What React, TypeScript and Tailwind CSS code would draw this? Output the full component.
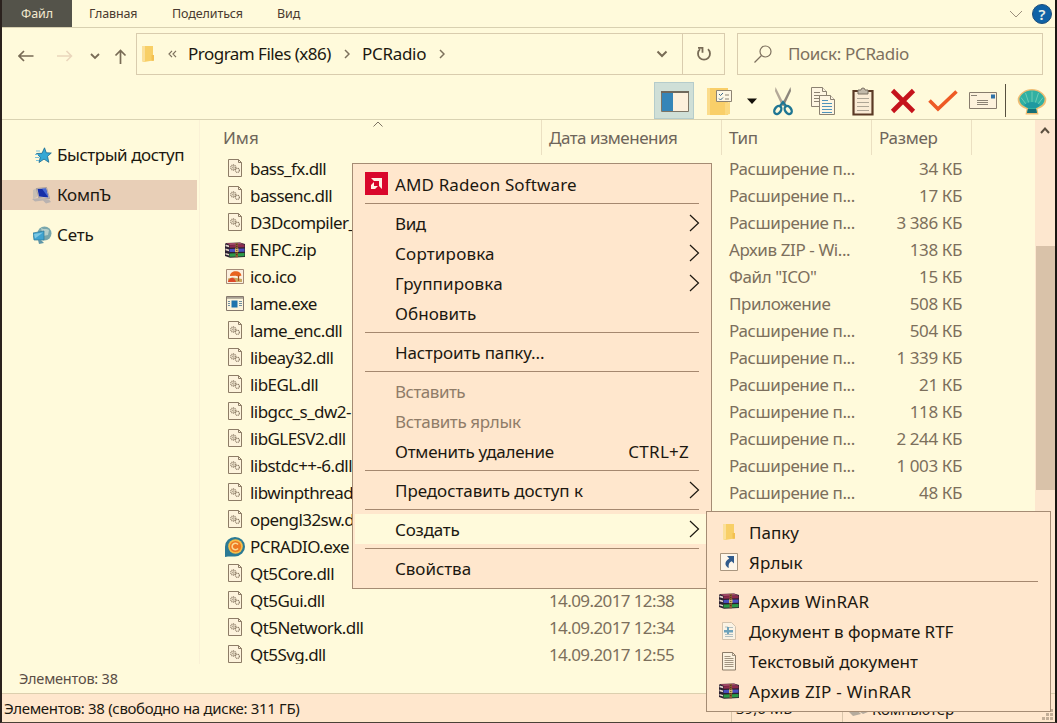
import React from 'react'
import clsx from 'clsx'

type FileKind = 'dll' | 'zip' | 'ico' | 'exe' | 'radio'

type FileRow = {
  name: string
  kind: FileKind
  date?: string
  type?: string
  size?: string
}

const files: FileRow[] = [
  { name: 'bass_fx.dll', kind: 'dll', type: 'Расширение п...', size: '34 КБ' },
  { name: 'bassenc.dll', kind: 'dll', type: 'Расширение п...', size: '17 КБ' },
  { name: 'D3Dcompiler_47.dll', kind: 'dll', type: 'Расширение п...', size: '3 386 КБ' },
  { name: 'ENPC.zip', kind: 'zip', type: 'Архив ZIP - Wi...', size: '138 КБ' },
  { name: 'ico.ico', kind: 'ico', type: 'Файл "ICO"', size: '15 КБ' },
  { name: 'lame.exe', kind: 'exe', type: 'Приложение', size: '508 КБ' },
  { name: 'lame_enc.dll', kind: 'dll', type: 'Расширение п...', size: '504 КБ' },
  { name: 'libeay32.dll', kind: 'dll', type: 'Расширение п...', size: '1 339 КБ' },
  { name: 'libEGL.dll', kind: 'dll', type: 'Расширение п...', size: '21 КБ' },
  { name: 'libgcc_s_dw2-1.dll', kind: 'dll', type: 'Расширение п...', size: '118 КБ' },
  { name: 'libGLESV2.dll', kind: 'dll', type: 'Расширение п...', size: '2 244 КБ' },
  { name: 'libstdc++-6.dll', kind: 'dll', type: 'Расширение п...', size: '1 003 КБ' },
  { name: 'libwinpthread-1.dll', kind: 'dll', type: 'Расширение п...', size: '48 КБ' },
  { name: 'opengl32sw.dll', kind: 'dll' },
  { name: 'PCRADIO.exe', kind: 'radio' },
  { name: 'Qt5Core.dll', kind: 'dll' },
  { name: 'Qt5Gui.dll', kind: 'dll', date: '14.09.2017 12:38' },
  { name: 'Qt5Network.dll', kind: 'dll', date: '14.09.2017 12:34' },
  { name: 'Qt5Svg.dll', kind: 'dll', date: '14.09.2017 12:55' },
]

function DllIcon() {
  return (
    <svg width="16" height="19" viewBox="0 0 16 19" fill="none" stroke="#8d7c66">
      <path d="M1.500 .5h10l3 3v14h-13z" fill="#fdf3dc" />
      <path d="M11.500 .5v3h3" />
      <circle cx="6.300" cy="8.500" r="2.500" strokeWidth="1.300" strokeDasharray="1 .6" />
      <circle cx="6.300" cy="8.500" r=".8" strokeWidth=".7" />
      <circle cx="10.400" cy="11.300" r="2" strokeWidth="1.200" strokeDasharray="1 .5" />
    </svg>
  )
}

function RarIcon() {
  return (
    <svg width="20" height="16" viewBox="0 0 20 16">
      <path d="M1 1l14-.5L20 2v13l-15 .7L0 14V2z" fill="#2b2030" />
      <path d="M1 1.200L15 .8l4.500 1.600L5 3z" fill="#a44a68" />
      <path d="M4.500 3.200l15-.4v2.400l-15 .5z" fill="#8e2a4e" />
      <path d="M4.500 7l15-.4v3.100l-15 .4z" fill="#4a4fc0" />
      <path d="M4.500 11.500l15-.4v3.200l-15 .5z" fill="#2a9a48" />
      <path d="M.5 2.600l3.500 1v1.600l-3.500-1zM.5 6.600l3.500 1v1.600l-3.500-1zM.5 11l3.500 1v1.600l-3.500-1z" fill="#e6d8cf" />
      <path d="M10.500 1H13v14.300h-2.500z" fill="#8a5a30" />
      <path d="M10 6.500h3.500v3.500H10z" fill="#d8b868" />
      <path d="M11.800 2v12" stroke="#3b2718" strokeWidth=".9" strokeDasharray="1 1" />
    </svg>
  )
}

function PictureIcon() {
  return (
    <svg width="18" height="15" viewBox="0 0 18 15">
      <path d="M.5 .5h17v14H.5z" fill="#fbf0df" stroke="#a58b78" />
      <path d="M2 9.500l5-1 9 1.500v3H2z" fill="#c9a860" />
      <path d="M4 7C4 4 7 2 10 2.200c3 0 5 1.800 5.500 4.300l-3 1-3-.8z" fill="#e8641f" />
      <path d="M12.500 6.500v5.500" stroke="#a8501c" strokeWidth="1.200" />
      <path d="M2 12.500C4 8 8 7 10 13H2z" fill="#dd4a2a" />
    </svg>
  )
}

function AppIcon() {
  return (
    <svg width="18" height="15" viewBox="0 0 18 15">
      <path d="M.5 .5h17v14H.5z" fill="#fdf5dc" stroke="#85786c" />
      <path d="M1 1h16v1.800H1z" fill="#a9a294" />
      <path d="M5.500 4.500h6v7h-6z" fill="#1f74ad" />
      <path d="M2 5.500h2M2 7.500h2M2 9.500h2M13 5.500h3M13 7.500h3M13 9.500h3" stroke="#6f8ea0" />
    </svg>
  )
}

function RadioIcon() {
  return (
    <svg width="20" height="20" viewBox="0 0 20 20">
      <path d="M0 20V9.700A10 9.700 0 1 1 10 19.400H3z" fill="#2b7a94" />
      <circle cx="10.500" cy="9.500" r="7.300" fill="#f6bd48" />
      <circle cx="10.500" cy="9.500" r="5.600" fill="#ee7a22" />
      <path d="M13 7.400a3.300 3.300 0 1 0 0 4.200" fill="none" stroke="#fbd890" strokeWidth="1.600" />
    </svg>
  )
}

function FolderIcon({ className }: { className?: string }) {
  return (
    <svg width="13" height="18" viewBox="0 0 13 18" className={className}>
      <path d="M1 1h11v14.500L3 17l-2-1z" fill="#f8cf66" />
      <path d="M1 1h3v15.500H1z" fill="#fbe09a" />
      <path d="M10.500 10H13v5.800h-2.500z" fill="#f3c050" />
    </svg>
  )
}

function FileIcon({ kind }: { kind: FileKind }) {
  if (kind === 'zip') return <RarIcon />
  if (kind === 'ico') return <PictureIcon />
  if (kind === 'exe') return <AppIcon />
  if (kind === 'radio') return <RadioIcon />
  return <DllIcon />
}

function ChevronDown({ className }: { className?: string }) {
  return (
    <svg width="12" height="8" viewBox="0 0 12 8" fill="none" stroke="currentColor" className={className}>
      <path d="M1.500 1.500L6 6l4.500-4.500" />
    </svg>
  )
}

function Crumb() {
  return (
    <svg width="6" height="10" viewBox="0 0 6 10" fill="none" stroke="#7c705c" strokeWidth="1.500">
      <path d="M1 1l4 4-4 4" />
    </svg>
  )
}

function MenuBar() {
  return (
    <div className="flex h-7 shrink-0 items-start border-b border-[#d8d0b0] text-[12.5px] leading-[27px] tracking-[-0.1px] text-[#4a3a30]">
      <div className="w-[70px] bg-[#54534a] text-center text-[#f3ead0]">Файл</div>
      <div className="ml-[17px] w-[83px]">Главная</div>
      <div className="w-[105px]">Поделиться</div>
      <div>Вид</div>
      <div className="ml-auto flex h-[27px] items-center">
        <svg width="14" height="8" viewBox="0 0 14 8" fill="none" stroke="#9c8f7c">
          <path d="M1 1l6 6 6-6" />
        </svg>
        <div className="ml-[9px] mr-[3px] h-5 w-5 rounded-full border border-[#1d4f7c] bg-[#0f62a6] text-center text-[15px] font-semibold leading-[18px] text-[#e8f0e8]">
          ?
        </div>
      </div>
    </div>
  )
}

function AddressBar() {
  return (
    <div className="flex h-[54px] shrink-0 items-start pt-[5px]">
      <div className="flex h-[42px] w-[134px] items-center pl-4 pt-1 text-[#786b55]">
        <svg width="16" height="12" viewBox="0 0 16 12" fill="none" stroke="currentColor" strokeWidth="1.700">
          <path d="M15.500 6H1M6 1L1 6l5 5" />
        </svg>
        <svg width="16" height="12" viewBox="0 0 16 12" fill="none" stroke="#ead6bc" strokeWidth="1.500" className="ml-[23px]">
          <path d="M0 6h14.500M9.500 1l5 5-5 5" />
        </svg>
        <svg width="10" height="7" viewBox="0 0 10 7" fill="none" stroke="currentColor" strokeWidth="1.800" className="ml-[17px]">
          <path d="M1 1l4 4 4-4" />
        </svg>
        <svg width="13" height="15" viewBox="0 0 13 15" fill="none" stroke="currentColor" strokeWidth="1.700" className="ml-[14px]">
          <path d="M6.500 15V1.500M1.500 6.500l5-5 5 5" />
        </svg>
      </div>
      <div className="flex h-[42px] w-[589px] items-center border border-[#d9ccae] pl-1 text-[17px] tracking-[-0.52px] text-[#1c1810]">
        <FolderIcon />
        <svg width="9" height="8" viewBox="0 0 9 8" fill="none" stroke="#7c705c" strokeWidth="1.200" className="ml-[14px]">
          <path d="M4 .8L1 4l3 3.200M8 .8L5 4l3 3.200" />
        </svg>
        <span className="ml-[11px] w-[156px]">Program Files (x86)</span>
        <Crumb />
        <span className="ml-3 w-[77px] tracking-[-0.3px]">PCRadio</span>
        <Crumb />
        <ChevronDown className="ml-auto stroke-2 text-[#786b55]" />
        <div className="ml-[14px] flex h-full w-[42px] items-center justify-center border-l border-[#d9ccae]">
          <svg width="16" height="16" viewBox="0 0 16 16" fill="none" stroke="#786b55" strokeWidth="1.800">
            <path d="M4 3.200A6 6 0 1 0 12 3.200M2 1.800h4.500v5" />
          </svg>
        </div>
      </div>
      <div className="ml-3 flex h-[42px] w-[306px] items-center border border-[#d9ccae] pl-4 text-[17px] tracking-[-0.35px] text-[#7d705e]">
        <svg width="18" height="18" viewBox="0 0 18 18" fill="none" stroke="currentColor" strokeWidth="1.200">
          <circle cx="11.500" cy="6.500" r="5.500" />
          <path d="M7.500 10.500L.5 17.500" />
        </svg>
        <span className="ml-4">Поиск: PCRadio</span>
      </div>
    </div>
  )
}

function Toolbar() {
  return (
    <div className="flex h-[38px] shrink-0 items-center border-b border-[#d9d2b2] pl-[652px]">
      <div className="flex h-[37px] w-10 items-center justify-center border border-[#b5cccb] bg-[#cfdfd7]">
        <svg width="28" height="21" viewBox="0 0 28 21" className="ml-[2px] mt-px">
          <path d="M.5 .5h27v20H.5z" fill="#fdf0dc" stroke="#7d7566" />
          <path d="M1 1h11v19H1z" fill="#3585b8" />
          <path d="M0 0h28v2H0z" fill="#6f685c" />
        </svg>
      </div>
      <svg width="26" height="29" viewBox="0 0 26 29" className="ml-[13px] mt-px">
        <path d="M0 1h21v27H0z" fill="#f9cf69" />
        <path d="M0 1h3v27H0z" fill="#fbdc8c" />
        <path d="M18 16l5-1v12l-5 1z" fill="#fbd980" />
        <path d="M9.500 3.500h15v11h-15z" fill="#fdf7e4" stroke="#8d8372" />
        <path d="M12 7l1.500 1.500L16 6M12 11.500l1.500 1.500 2.500-2.500" stroke="#3b6a8c" fill="none" />
        <path d="M18 8h4M18 12h4" stroke="#8d8372" />
      </svg>
      <svg width="10" height="6" viewBox="0 0 10 6" className="ml-[14px] mt-px">
        <path d="M0 .5h10L5 6z" fill="#14100a" />
      </svg>
      <svg width="22" height="29" viewBox="0 0 22 29" fill="none" className="ml-[15px] mt-px">
        <path d="M3.500 0l9 18-2.500 1L3 4z" fill="#b4a898" />
        <path d="M18.500 0l-9 18 2.500 1L19 4z" fill="#8d867c" />
        <ellipse cx="5.800" cy="23" rx="3" ry="4.400" transform="rotate(35 5.800 23)" stroke="#1f7693" strokeWidth="2.400" />
        <ellipse cx="16.200" cy="23" rx="3" ry="4.400" transform="rotate(-35 16.200 23)" stroke="#1f7693" strokeWidth="2.400" />
        <path d="M8 19l3-4 3 4" stroke="#1f7693" strokeWidth="2.200" />
      </svg>
      <svg width="25" height="29" viewBox="0 0 25 29" fill="#fef6e2" stroke="#8c8272" className="ml-[17px] mt-px">
        <path d="M.5 .5h11l4 4v15H.5z" />
        <path d="M11.500 .5v4h4" />
        <path d="M3 5.500h6M3 8.500h9M3 11.500h9M3 14.500h9" />
        <path d="M8.500 8.500h11l4 4v15h-15z" />
        <path d="M19.500 8.500v4h4" />
        <path d="M11 13.500h6M11 16.500h10M11 19.500h10M11 22.500h10M11 25.500h10" stroke="#4f93ba" />
      </svg>
      <svg width="22" height="29" viewBox="0 0 22 29" className="ml-4 mt-px">
        <path d="M1.500 4h19v23.500h-19z" fill="#faebd5" stroke="#5b3a25" strokeWidth="2.200" />
        <path d="M6 3h3a2 2 0 0 1 4 0h3v4H6z" fill="#c2b9aa" stroke="#7a7062" />
        <path d="M5 11.500h12M5 15.500h12M5 19.500h12M5 23.500h12" stroke="#aea595" />
      </svg>
      <svg width="26" height="26" viewBox="0 0 26 26" stroke="#c5131c" strokeWidth="4.600" className="ml-4 mt-px">
        <path d="M2.500 2.500l21 21M23.500 2.500l-21 21" />
      </svg>
      <svg width="30" height="22" viewBox="0 0 30 22" fill="none" stroke="#ee5a24" strokeWidth="3.600" className="ml-3 mt-px">
        <path d="M1.500 10.500l8.500 8.500L28.500 1.500" />
      </svg>
      <svg width="28" height="17" viewBox="0 0 28 17" className="ml-[11px]">
        <path d="M.5 .5h27v16H.5z" fill="#fdf2dc" stroke="#877c6d" />
        <path d="M2 3.500h6M8 10.500h11M8 12.500h11M8 8.500h11" stroke="#8b8274" />
        <path d="M22 2.500h4v4h-4z" fill="#2f72a8" />
      </svg>
      <div className="ml-2 h-[33px] w-px bg-[#57503f]" />
      <svg width="30" height="27" viewBox="0 0 30 27" className="ml-[11px] mt-[2px]">
        <path d="M8.500 26.500l1-5.500C3 19 0 15 .8 10 3 5 8 1 15 1s12 4 14.200 9c.8 5-2.200 9-8.700 11l1 5.500z" fill="#efbc72" />
        <path d="M10 25l1-5C5 18 2 15 2.500 10 5 5 9 2.500 15 2.500S25 5 27.500 10c.5 5-2.500 8-8.500 10l1 5z" fill="#31b0a2" />
        <path d="M15 20V3.500M13.500 20L8.500 5M16.500 20l5-15M12 20L4 9.500M18 20l8-10.500" stroke="#86d9c2" strokeWidth=".7" />
        <path d="M7 17c4-4 12-4 16 0-1 1.500-3 2.500-4 3h-8c-1-.5-3-1.500-4-3z" fill="#1f99a0" />
        <path d="M10 25l1-4h8l1 4z" fill="#156f76" />
      </svg>
    </div>
  )
}

function Sidebar() {
  return (
    <div className="h-[544px] w-[198px] shrink-0 border-r border-[#faf1d6] pt-5 text-[17px] tracking-[-0.46px] text-[#1c1810]">
      <div className="flex h-[30px] items-center pl-8">
        <svg width="18" height="17" viewBox="0 0 18 17">
          <path d="M10.500 .8l1.800 5 5 .2-3.800 3.300 1.300 6-4.800-3.200L5 15.500l1.300-5.300L2.500 6.500l5.500-.2z" fill="#35a8d5" stroke="#17678f" strokeWidth=".8" />
          <path d="M2 4h4M1 7.500h3M1 10.500h4M2 13.500h3" stroke="#7cc1d8" />
        </svg>
        <span className="ml-[5px]">Быстрый доступ</span>
      </div>
      <div className="my-[10px] flex h-[30px] w-[195px] items-center bg-[#e8cfb7] pl-[30px]">
        <svg width="20" height="17" viewBox="0 0 20 17">
          <path d="M1 3l4-2v9l-4 2z" fill="#c8bfb4" />
          <path d="M4.500 1.500l10-1 3 11-11-1z" fill="#e9dfd0" stroke="#7f7a80" strokeWidth=".6" />
          <path d="M5.500 2l8.500-.6 2.400 9-9.400-1z" fill="#172fa8" />
          <path d="M10 1.700l4-.3 2.400 9z" fill="#4768d2" />
          <path d="M0 12l7-1 10 1.500 2 2.500-5 1.500-3-3-8 1z" fill="#b9b2b0" />
        </svg>
        <span className="ml-[5px] tracking-[-0.2px]">КомпЪ</span>
      </div>
      <div className="flex h-[30px] items-center pl-[31px]">
        <svg width="19" height="19" viewBox="0 0 19 19">
          <circle cx="11.500" cy="7.500" r="7" fill="#78a6ac" />
          <path d="M8 2c3 2 6 0 8 2l-1 5-5 1z" fill="#b6cfca" />
          <path d="M0 7l11-2v9L1 14z" fill="#3fa3d0" stroke="#2c7899" strokeWidth=".7" />
          <path d="M1 8l9-1.500-8 6z" fill="#7cc8e3" />
          <path d="M5 14h3l3 3-5 1z" fill="#5f96a8" />
        </svg>
        <span className="ml-[5px] tracking-[-0.2px]">Сеть</span>
      </div>
    </div>
  )
}

function FileList() {
  return (
    <div className="h-[544px] flex-1 overflow-hidden text-[17px]">
      <div className="flex h-[35px] leading-9 tracking-[-0.4px] text-[#6e655a]">
        <div className="relative w-[342px] border-r border-[#ebe0c2] pl-[23px] tracking-normal">
          Имя
          <svg width="10" height="6" viewBox="0 0 10 6" fill="none" stroke="#7d7363" className="absolute left-[173px] top-px">
            <path d="M.5 5.500L5 1l4.500 4.500" />
          </svg>
        </div>
        <div className="w-[180px] border-r border-[#ebe0c2] pl-[7px] tracking-[-0.5px]">Дата изменения</div>
        <div className="w-[150px] border-r border-[#ebe0c2] pl-[7px]">Тип</div>
        <div className="w-[100px] border-r border-[#ebe0c2] pl-[7px] tracking-[-0.3px]">Размер</div>
      </div>
      {files.map((file) => (
        <div key={file.name} className="flex h-[27px] items-center leading-[27px] tracking-[-0.4px] text-[#7c6f5c]">
          <div className="flex w-[50px] items-center justify-center pl-5">
            <FileIcon kind={file.kind} />
          </div>
          <div className="w-[299px] tracking-[-0.57px] text-[#1c1810]">{file.name}</div>
          <div className="w-[180px] tracking-[-0.6px]">{file.date}</div>
          <div className="w-[133px] whitespace-nowrap">{file.type}</div>
          <div className="w-[100px] text-right">{file.size}</div>
        </div>
      ))}
    </div>
  )
}

function Scrollbar() {
  return (
    <div className="flex h-[574px] w-5 shrink-0 flex-col items-center bg-[#fde7cf]">
      <svg width="10" height="7" viewBox="0 0 10 7" fill="none" stroke="#5c5040" strokeWidth="2" className="mt-[7px]">
        <path d="M1 6l4-4.500L9 6" />
      </svg>
      <div className="mt-[112px] h-[244px] w-[19px] bg-[#d9c2a9]" />
    </div>
  )
}

function StatusBar() {
  return (
    <div className="flex h-[29px] shrink-0 items-stretch border-t border-[#dccfae] bg-[#ffe7cd] text-[15px] leading-[29px] tracking-[-0.33px] text-[#1c1810]">
      <div className="w-[730px] border-r border-[#d9c5aa] pl-[2px]">Элементов: 38 (свободно на диске: 311 ГБ)</div>
      <div className="w-[111px] border-r border-[#d9c5aa] pl-1 tracking-normal">39,6 МБ</div>
      <div className="flex flex-1 items-center pl-[6px]">
        <svg width="20" height="14" viewBox="0 0 20 14" className="mt-2">
          <path d="M0 7l8-2 4 4-8 2zM11 7l6-3 2 3-5 2z" fill="#b5ab9d" />
        </svg>
        <span className="ml-[3px] pt-[2px] tracking-[-0.1px]">Компьютер</span>
      </div>
      <svg width="11" height="11" viewBox="0 0 11 11" fill="#c2ae97" className="mb-[2px] mr-[2px] self-end">
        <path d="M8 0h3v3H8zM4 4h3v3H4zM8 4h3v3H8zM0 8h3v3H0zM4 8h3v3H4zM8 8h3v3H8z" />
      </svg>
    </div>
  )
}

type MenuItemProps = {
  label: string
  icon?: React.ReactNode
  shortcut?: string
  submenu?: boolean
  disabled?: boolean
  active?: boolean
  className?: string
}

function MenuItem({ label, icon, shortcut, submenu, disabled, active, className }: MenuItemProps) {
  return (
    <div className={clsx('flex h-[30px] items-center', active && 'bg-[#fffadb]', disabled && 'text-[#8f7c68]', className)}>
      <div className="flex w-10 shrink-0 items-center justify-center">{icon}</div>
      <span className="pt-[2px]">{label}</span>
      {shortcut && <span className="ml-auto mr-[20px] pt-[2px] tracking-[0.25px]">{shortcut}</span>}
      {submenu && (
        <svg width="11" height="18" viewBox="0 0 11 18" fill="none" stroke="#1c1810" strokeWidth="1.200" className="ml-auto mr-[9px]">
          <path d="M1 1l8.500 8L1 17" />
        </svg>
      )}
    </div>
  )
}

function Separator() {
  return <div className="mx-[10px] my-1 h-px bg-[#a5886f]" />
}

function AmdIcon() {
  return (
    <svg width="23" height="23" viewBox="0 0 23 23" className="-mt-[2px] ml-[2px]">
      <path d="M0 0h23v23H0z" fill="#d9072c" />
      <path d="M6 6h11v11l-3-3V9H9z" fill="#fff2e4" />
      <path d="M9 10v4h4l-3 3H6v-4z" fill="#fff2e4" />
    </svg>
  )
}

function ShortcutIcon() {
  return (
    <svg width="18" height="18" viewBox="0 0 18 18">
      <path d="M.5 .5h17v17H.5z" fill="#fdf6ea" stroke="#a9967f" />
      <path d="M7 3h7v7.500l-2.300-2.300C9 9.500 8.200 11.500 8.800 15 4.500 13 4 8.500 9.300 5.500z" fill="#305b8c" />
    </svg>
  )
}

function RtfIcon() {
  return (
    <svg width="16" height="18" viewBox="0 0 16 18">
      <path d="M1.500 .5h9l4 4v13h-13z" fill="#fbf3e4" stroke="#d3c3ae" />
      <path d="M4 5h3M8 5.500h4M4 12.500h8M4 14.500h8" stroke="#b3bfc0" />
      <path d="M3 8h9v2.500H3zM6 5h2v7H6z" fill="#6fa3bb" />
    </svg>
  )
}

function TextIcon() {
  return (
    <svg width="16" height="19" viewBox="0 0 16 19" fill="none" stroke="#8c7c69">
      <path d="M1.500 .5h10l3 3v14.500h-13z" fill="#fbf1de" />
      <path d="M11.500 .5v3h3M3.500 4.500h6M3.500 6.500h9M3.500 8.500h9M3.500 10.500h9M3.500 12.500h9M3.500 14.500h9" strokeWidth=".8" />
    </svg>
  )
}

function ContextMenu() {
  return (
    <div className="absolute left-[352px] top-[163px] w-[360px] border border-[#a58c74] bg-[#ffe7cd] px-[2px] py-[5px]">
      <MenuItem label="AMD Radeon Software" icon={<AmdIcon />} className="tracking-[0.13px]" />
      <Separator />
      <MenuItem label="Вид" submenu className="tracking-[-0.4px]" />
      <MenuItem label="Сортировка" submenu className="tracking-[0.2px]" />
      <MenuItem label="Группировка" submenu className="tracking-[0.17px]" />
      <MenuItem label="Обновить" className="tracking-[0.05px]" />
      <Separator />
      <MenuItem label="Настроить папку..." className="tracking-[-0.13px]" />
      <Separator />
      <MenuItem label="Вставить" disabled className="tracking-[-0.5px]" />
      <MenuItem label="Вставить ярлык" disabled className="tracking-[-0.35px]" />
      <MenuItem label="Отменить удаление" shortcut="CTRL+Z" className="tracking-[-0.25px]" />
      <Separator />
      <MenuItem label="Предоставить доступ к" submenu className="tracking-[-0.05px]" />
      <Separator />
      <MenuItem label="Создать" submenu active className="tracking-[-0.2px]" />
      <Separator />
      <MenuItem label="Свойства" className="tracking-[-0.05px]" />
    </div>
  )
}

function CreateMenu() {
  return (
    <div className="absolute left-[706px] top-[511px] w-[345px] border border-[#a58c74] bg-[#ffe7cd] px-[2px] py-[5px]">
      <MenuItem label="Папку" icon={<FolderIcon className="-ml-[2px]" />} className="tracking-normal" />
      <MenuItem label="Ярлык" icon={<ShortcutIcon />} className="tracking-[0.1px]" />
      <Separator />
      <MenuItem label="Архив WinRAR" icon={<RarIcon />} className="tracking-[0.3px]" />
      <MenuItem label="Документ в формате RTF" icon={<RtfIcon />} className="tracking-[-0.03px]" />
      <MenuItem label="Текстовый документ" icon={<TextIcon />} className="tracking-[-0.03px]" />
      <MenuItem label="Архив ZIP - WinRAR" icon={<RarIcon />} className="tracking-[0.3px]" />
    </div>
  )
}

export default function App() {
  return (
    <div className="relative h-[723px] w-[1057px] overflow-hidden whitespace-nowrap bg-[#fffadb] font-['Noto_Sans',sans-serif]">
      <div className="flex h-[723px] flex-col border-b border-l-2 border-r-2 border-b-[#4a4036] border-l-[#2a211d] border-r-[#1a1712]">
        <MenuBar />
        <AddressBar />
        <Toolbar />
        <div className="flex min-h-0 flex-1">
          <div className="flex flex-1 flex-col">
            <div className="flex">
              <Sidebar />
              <FileList />
            </div>
            <div className="pl-[17px] text-[14.5px] leading-[29px] tracking-[-0.2px] text-[#5a4d45]">Элементов: 38</div>
          </div>
          <Scrollbar />
        </div>
        <StatusBar />
      </div>
      <div className="text-[17px] text-[#1c1810]">
        <ContextMenu />
        <CreateMenu />
      </div>
    </div>
  )
}
